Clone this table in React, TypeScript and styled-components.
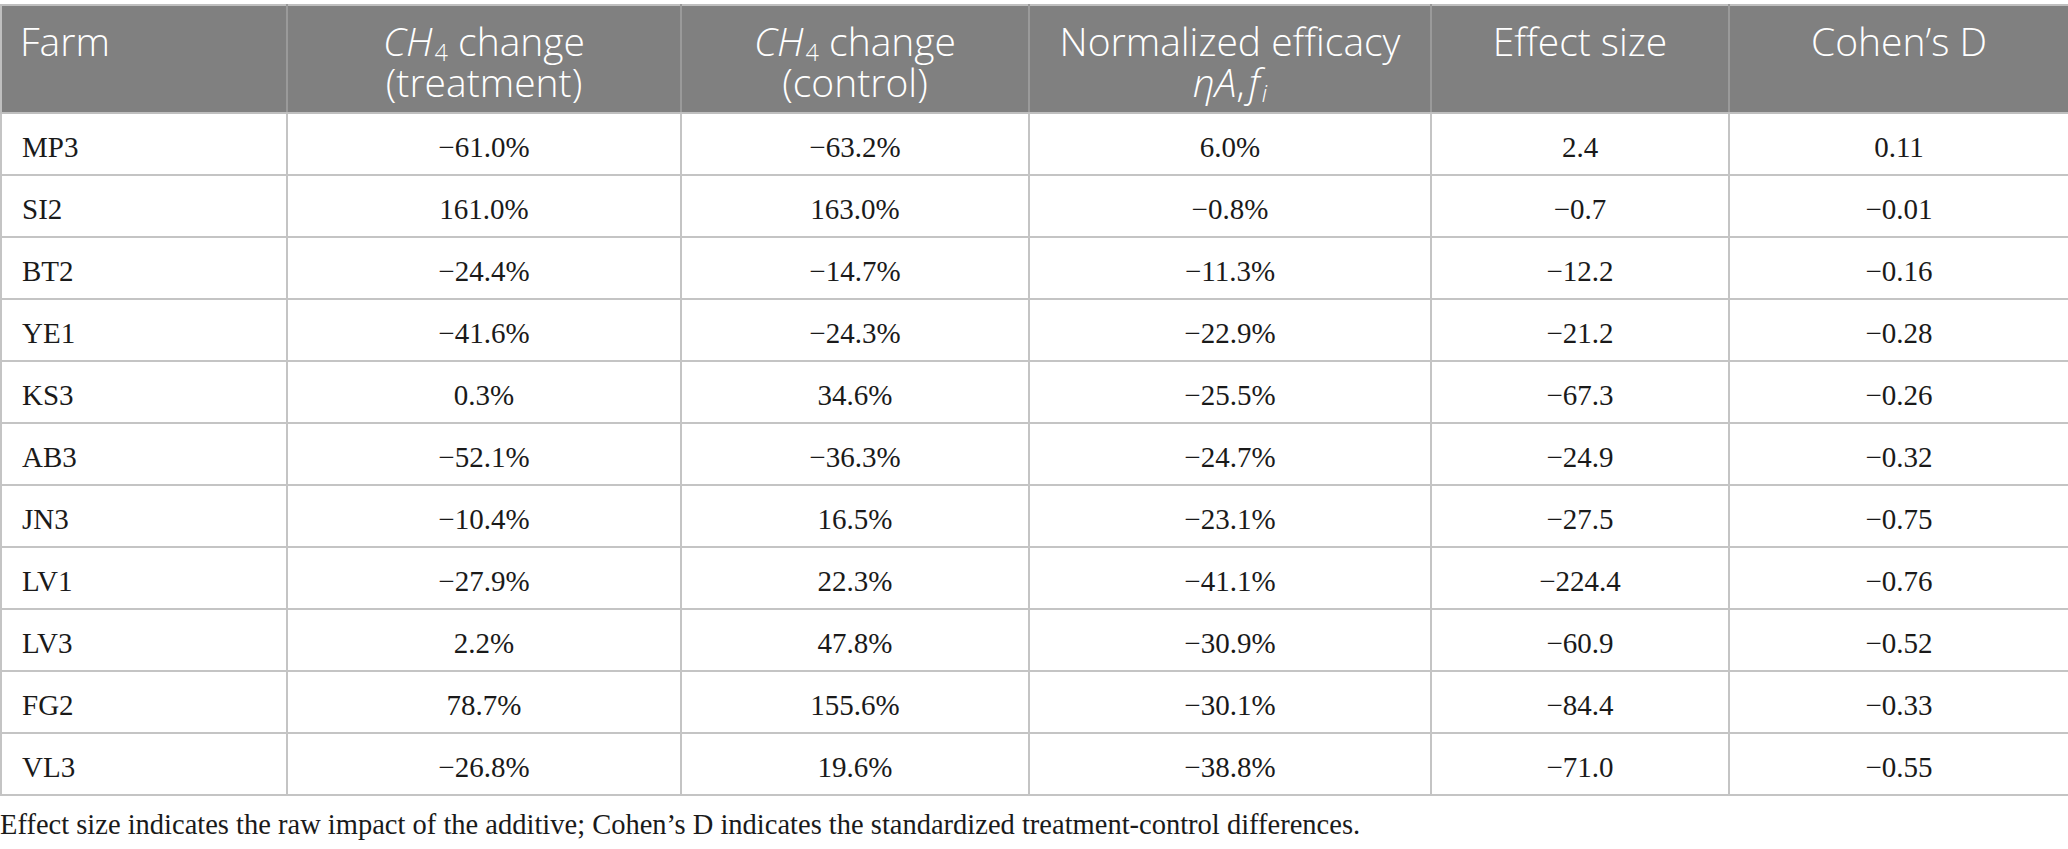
import React from 'react'
import styled, { createGlobalStyle } from 'styled-components'

const GlobalStyle = createGlobalStyle`
  html, body {
    margin: 0;
    padding: 0;
    background: #ffffff;
  }
`

const Page = styled.div`
  width: 2068px;
  padding-top: 4px;
`

const Table = styled.table`
  width: 2068px;
  table-layout: fixed;
  border-collapse: collapse;
  border: 2px solid #bfbfbf;
`

const HeadCell = styled.th<{ $left?: boolean }>`
  background: #808080;
  color: #ffffff;
  font-family: 'Open Sans', 'Noto Sans', sans-serif;
  font-weight: 300;
  font-size: 39px;
  line-height: 41px;
  text-align: ${(p) => (p.$left ? 'left' : 'center')};
  vertical-align: top;
  padding: 14px 18px 0;
  height: 92px;
  border-left: 2px solid #9a9a9a;
  border-bottom: 2px solid #bfbfbf;
  &:first-child {
    border-left: none;
  }
`

const Cell = styled.td<{ $left?: boolean }>`
  font-family: 'Liberation Serif', 'Times New Roman', serif;
  font-size: 29px;
  line-height: 32px;
  color: #1a1a1a;
  text-align: ${(p) => (p.$left ? 'left' : 'center')};
  vertical-align: top;
  padding: 17px 20px 0;
  height: 43px;
  border: 2px solid #c4c4c4;
`

const Sym = styled.i<{ $gap?: boolean }>`
  font-style: italic;
  margin-left: ${(p) => (p.$gap ? '4px' : '0')};
`

const Sub = styled.sub`
  font-size: 60%;
  font-style: normal;
  vertical-align: -5px;
  line-height: 0;
  margin-left: 2px;
`

const Footnote = styled.p`
  margin: 13px 0 0;
  font-family: 'Liberation Serif', 'Times New Roman', serif;
  font-size: 28.5px;
  line-height: 32px;
  color: #1a1a1a;
`

const widths = [286, 394, 348, 402, 298, 340]

const rows: string[][] = [
  ['MP3', '−61.0%', '−63.2%', '6.0%', '2.4', '0.11'],
  ['SI2', '161.0%', '163.0%', '−0.8%', '−0.7', '−0.01'],
  ['BT2', '−24.4%', '−14.7%', '−11.3%', '−12.2', '−0.16'],
  ['YE1', '−41.6%', '−24.3%', '−22.9%', '−21.2', '−0.28'],
  ['KS3', '0.3%', '34.6%', '−25.5%', '−67.3', '−0.26'],
  ['AB3', '−52.1%', '−36.3%', '−24.7%', '−24.9', '−0.32'],
  ['JN3', '−10.4%', '16.5%', '−23.1%', '−27.5', '−0.75'],
  ['LV1', '−27.9%', '22.3%', '−41.1%', '−224.4', '−0.76'],
  ['LV3', '2.2%', '47.8%', '−30.9%', '−60.9', '−0.52'],
  ['FG2', '78.7%', '155.6%', '−30.1%', '−84.4', '−0.33'],
  ['VL3', '−26.8%', '19.6%', '−38.8%', '−71.0', '−0.55'],
]

const Methane = () => (
  <>
    <Sym>CH</Sym>
    <Sub>4</Sub>
  </>
)

export default function App() {
  return (
    <Page>
      <GlobalStyle />
      <Table>
        <colgroup>
          {widths.map((w, i) => (
            <col key={i} style={{ width: w }} />
          ))}
        </colgroup>
        <thead>
          <tr>
            <HeadCell $left>Farm</HeadCell>
            <HeadCell>
              <Methane /> change
              <br />
              (treatment)
            </HeadCell>
            <HeadCell>
              <Methane /> change
              <br />
              (control)
            </HeadCell>
            <HeadCell>
              Normalized efficacy
              <br />
              <Sym>ηA</Sym>,<Sym $gap>f</Sym>
              <Sub>
                <Sym>i</Sym>
              </Sub>
            </HeadCell>
            <HeadCell>Effect size</HeadCell>
            <HeadCell>Cohen’s D</HeadCell>
          </tr>
        </thead>
        <tbody>
          {rows.map((row) => (
            <tr key={row[0]}>
              {row.map((v, i) => (
                <Cell key={i} $left={i === 0}>
                  {v}
                </Cell>
              ))}
            </tr>
          ))}
        </tbody>
      </Table>
      <Footnote>
        Effect size indicates the raw impact of the additive; Cohen’s D indicates the
        standardized treatment-control differences.
      </Footnote>
    </Page>
  )
}
